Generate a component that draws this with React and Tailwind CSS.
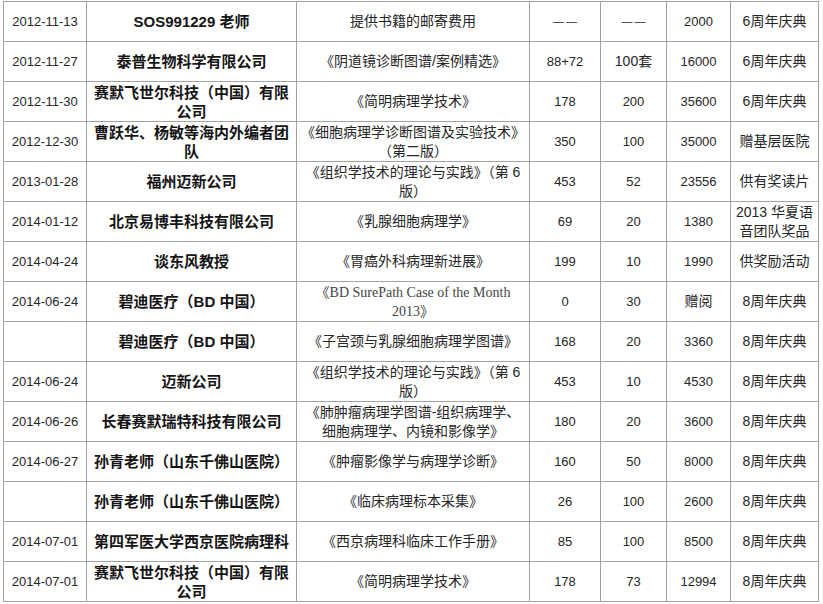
const rows = [
  ['2012-11-13', 'SOS991229 老师', '提供书籍的邮寄费用', '——', '——', '2000', '6周年庆典'],
  ['2012-11-27', '泰普生物科学有限公司', '《阴道镜诊断图谱/案例精选》', '88+72', '100套', '16000', '6周年庆典'],
  ['2012-11-30', '赛默飞世尔科技（中国）有限公司', '《简明病理学技术》', '178', '200', '35600', '6周年庆典'],
  ['2012-12-30', '曹跃华、杨敏等海内外编者团队', '《细胞病理学诊断图谱及实验技术》（第二版）', '350', '100', '35000', '赠基层医院'],
  ['2013-01-28', '福州迈新公司', '《组织学技术的理论与实践》（第 6 版）', '453', '52', '23556', '供有奖读片'],
  ['2014-01-12', '北京易博丰科技有限公司', '《乳腺细胞病理学》', '69', '20', '1380', '2013 华夏语音团队奖品'],
  ['2014-04-24', '谈东风教授', '《胃癌外科病理新进展》', '199', '10', '1990', '供奖励活动'],
  ['2014-06-24', '碧迪医疗（BD 中国）', '《BD SurePath Case of the Month 2013》', '0', '30', '赠阅', '8周年庆典', true],
  ['', '碧迪医疗（BD 中国）', '《子宫颈与乳腺细胞病理学图谱》', '168', '20', '3360', '8周年庆典'],
  ['2014-06-24', '迈新公司', '《组织学技术的理论与实践》（第 6 版）', '453', '10', '4530', '8周年庆典'],
  ['2014-06-26', '长春赛默瑞特科技有限公司', '《肺肿瘤病理学图谱-组织病理学、细胞病理学、内镜和影像学》', '180', '20', '3600', '8周年庆典'],
  ['2014-06-27', '孙青老师（山东千佛山医院）', '《肿瘤影像学与病理学诊断》', '160', '50', '8000', '8周年庆典'],
  ['', '孙青老师（山东千佛山医院）', '《临床病理标本采集》', '26', '100', '2600', '8周年庆典'],
  ['2014-07-01', '第四军医大学西京医院病理科', '《西京病理科临床工作手册》', '85', '100', '8500', '8周年庆典'],
  ['2014-07-01', '赛默飞世尔科技（中国）有限公司', '《简明病理学技术》', '178', '73', '12994', '8周年庆典'],
]

const cell = 'h-[40px] border-r border-b border-[#a3a3a3] flex items-center justify-center text-center px-1 leading-[19px]'

// the double dash in the reference is two short, separate strokes
function Value({ v }) {
  if (v === '——') {
    return <span className="font-['Liberation_Sans'] text-[11px] tracking-[2px] pl-[2px]">——</span>
  }
  return v
}

function App() {
  return (
    <div className="min-h-[604px] w-[823px] bg-white pt-px pl-[3px] font-['Liberation_Sans','Noto_Sans_CJK_SC',sans-serif] text-[#262626]">
      <div className="w-[816px] grid grid-cols-[83px_210px_233px_71px_66px_64px_88px] border-l border-t border-[#a3a3a3]">
        {rows.map((r, i) => (
          <div key={i} className="contents">
            <div className={`${cell} text-[13px]`}>{r[0]}</div>
            <div className={`${cell} text-[15px] font-bold text-[#141414]`}>{r[1]}</div>
            <div
              className={
                r[7]
                  ? `${cell} text-[14px] font-['Liberation_Serif','Noto_Sans_CJK_SC',serif] text-[#444]`
                  : `${cell} text-[14px]`
              }
            >
              {r[2]}
            </div>
            <div className={`${cell} text-[13px]`}><Value v={r[3]} /></div>
            <div className={`${cell} ${r[4].includes('套') ? 'text-[14px]' : 'text-[13px]'}`}><Value v={r[4]} /></div>
            <div className={`${cell} ${r[5] === '赠阅' ? 'text-[14px]' : 'text-[13px]'}`}>{r[5]}</div>
            <div className={`${cell} text-[14px]`}>{r[6]}</div>
          </div>
        ))}
      </div>
    </div>
  )
}

export default App
